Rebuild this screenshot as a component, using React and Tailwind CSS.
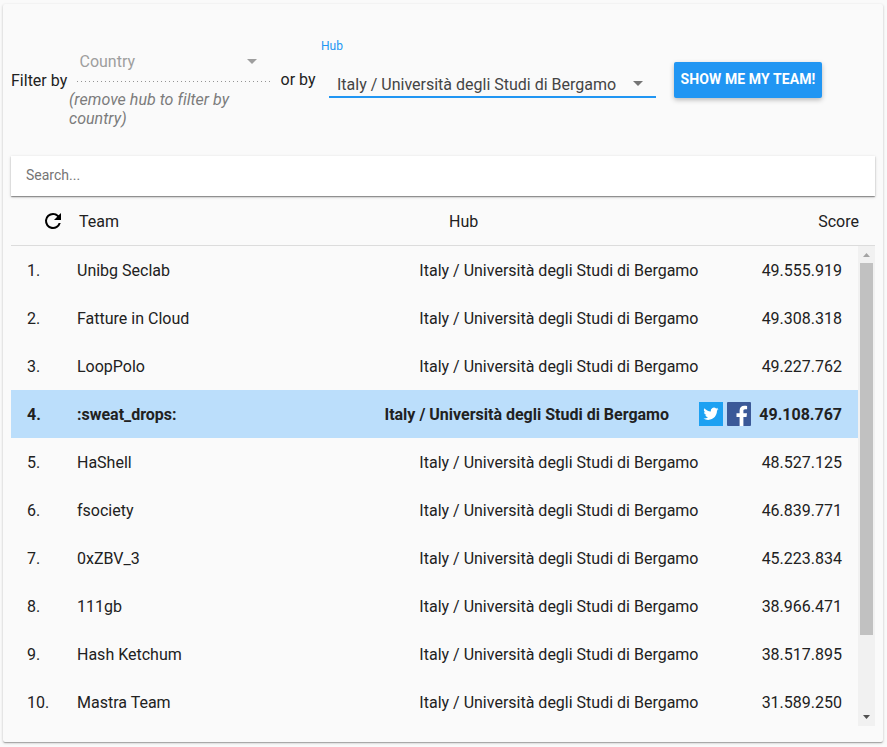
const HUB = 'Italy / Università degli Studi di Bergamo';

const TEAMS = [
  ['Unibg Seclab', '49.555.919'],
  ['Fatture in Cloud', '49.308.318'],
  ['LoopPolo', '49.227.762'],
  [':sweat_drops:', '49.108.767', true],
  ['HaShell', '48.527.125'],
  ['fsociety', '46.839.771'],
  ['0xZBV_3', '45.223.834'],
  ['111gb', '38.966.471'],
  ['Hash Ketchum', '38.517.895'],
  ['Mastra Team', '31.589.250'],
];

function Caret({ className }) {
  return (
    <svg className={className} width="24" height="24" viewBox="0 0 24 24" fill="currentColor">
      <path d="M7 10l5 5 5-5z" />
    </svg>
  );
}

function ShareIcons() {
  return (
    <div className="ml-[30px] flex gap-1">
      <svg width="24" height="24" viewBox="0 0 24 24">
        <path fill="#1da1f2" d="M0 0h24v24H0z" />
        <path
          fill="#fff"
          transform="translate(4.4 4.2) scale(.63)"
          d="M23.95 4.57a10 10 0 0 1-2.82.77 4.96 4.96 0 0 0 2.16-2.72c-.95.55-2 .95-3.12 1.18a4.92 4.92 0 0 0-8.38 4.48C7.69 8.1 4.07 6.13 1.64 3.16a4.92 4.92 0 0 0 1.52 6.57 4.9 4.9 0 0 1-2.23-.61v.06a4.92 4.92 0 0 0 3.95 4.83 5 5 0 0 1-2.21.08 4.94 4.94 0 0 0 4.6 3.42A9.87 9.87 0 0 1 0 19.54a13.99 13.99 0 0 0 7.55 2.21c9.05 0 14-7.5 14-13.98 0-.21 0-.42-.02-.63a9.94 9.94 0 0 0 2.46-2.55z"
        />
      </svg>
      <svg width="24" height="24" viewBox="0 0 24 24">
        <rect width="24" height="24" rx="1" fill="#3b5998" />
        <path
          fill="#fff"
          d="M12.6 24v-9.1H9.5v-3.6h3.1V8.6c0-3.1 1.9-4.8 4.7-4.8 1.3 0 2.5.1 2.8.2v3.2h-1.9c-1.5 0-1.8.7-1.8 1.8v2.3H20l-.5 3.6h-3.1V24z"
        />
      </svg>
    </div>
  );
}

function TeamRow({ rank, name, score, active }) {
  return (
    <div className={'flex h-12 items-center pl-4 pr-4 ' + (active ? 'bg-[#bbdefb] font-bold' : '')}>
      <div className="w-[50px]">{rank}.</div>
      <div className="flex-1">{name}</div>
      <div className="whitespace-nowrap">{HUB}</div>
      {active && <ShareIcons />}
      <div className={'text-right ' + (active ? 'w-[91px]' : 'w-[143.500px]')}>{score}</div>
    </div>
  );
}

function Filters() {
  return (
    <div className="flex h-[144px] items-start">
      <div className="w-[58px] whitespace-nowrap pt-[59px]">Filter by</div>
      <div className="w-[202px] pt-[33px]">
        <div className="ml-2 flex h-[32px] w-[193px] items-center justify-between pl-[2.500px] pr-[6px] text-[#9e9e9e]">
          <span className="pt-px">Country</span>
          <Caret />
        </div>
        <div className="ml-2 mt-1 h-px w-[193px] bg-[repeating-linear-gradient(to_right,#949494_0_1px,transparent_1px_4px)]" />
        <div className="mt-[8px] w-[180px] italic leading-[19px] tracking-[0.03px] text-[#7c7c7c]">
          (remove hub to filter by country)
        </div>
      </div>
      <div className="ml-[9.500px] w-[48.500px] pt-[58px]">or by</div>
      <div className="w-[327px] pt-[26px]">
        <div className="-ml-2 text-xs leading-4 text-[#2196f3]">Hub</div>
        <div className="mt-[12px] flex h-[32px] items-center justify-between border-b-2 border-[#2196f3] pl-2 pr-[6px] text-[#444]">
          <span className="pt-[7px]">{HUB}</span>
          <Caret className="mt-[3px] text-[#757575]" />
        </div>
      </div>
      <button className="ml-[18px] mt-[50px] h-[36px] w-[148px] whitespace-nowrap rounded-[2px] bg-[#2196f3] pb-[2px] text-sm font-bold tracking-[0.1px] text-white shadow-[0_2px_5px_rgba(0,0,0,0.26)]">
        SHOW ME MY TEAM!
      </button>
    </div>
  );
}

export default function App() {
  return (
    <div className="h-[747px] w-[887px] overflow-hidden bg-[#fafafa] pl-[3px] pt-1 font-['Roboto',sans-serif] text-base leading-[19px] text-[#212121]">
      <div className="h-[738px] w-[880px] rounded-[2px] bg-[#fafafa] p-2 shadow-[0_1px_3px_rgba(0,0,0,0.2),0_1px_1px_rgba(0,0,0,0.14),0_2px_1px_-1px_rgba(0,0,0,0.12)]">
        <Filters />
        <div className="flex h-10 items-center bg-white pl-[15px] shadow-[0_1px_3px_rgba(0,0,0,0.2),0_1px_1px_rgba(0,0,0,0.25),0_2px_1px_-1px_rgba(0,0,0,0.12)]">
          <input
            className="w-full bg-transparent pb-[2px] text-sm text-[#757575] outline-none placeholder:text-[#757575]"
            placeholder="Search..."
          />
        </div>
        <div className="flex h-[50px] items-center border-b border-[#dcdcdc] pl-[30px] pr-4">
          <svg width="24" height="24" viewBox="0 0 24 24" fill="#000">
            <path d="M17.65 6.35A7.96 7.96 0 0 0 12 4a8 8 0 1 0 7.73 10h-2.08A6 6 0 1 1 12 6c1.66 0 3.14.69 4.22 1.78L13 11h7V4z" />
          </svg>
          <div className="ml-[14px] w-[370px] pt-[2px]">Team</div>
          <div className="flex-1 pt-[2px]">Hub</div>
          <div className="pt-[2px]">Score</div>
        </div>
        <div className="flex h-[480px]">
          <div className="flex-1">
            {TEAMS.map(([name, score, active], i) => (
              <TeamRow key={name} rank={i + 1} name={name} score={score} active={active} />
            ))}
          </div>
          <div className="flex w-[17px] flex-col items-center bg-[#f1f1f1]">
            <svg width="17" height="17" viewBox="0 0 17 17">
              <path d="M5 11h7L8.500 7z" fill="#a3a3a3" />
            </svg>
            <div className="h-[372px] w-[13px] bg-[#c1c1c1]" />
            <svg className="mt-auto" width="17" height="17" viewBox="0 0 17 17">
              <path d="M5 6h7L8.500 10z" fill="#505050" />
            </svg>
          </div>
        </div>
      </div>
    </div>
  );
}
